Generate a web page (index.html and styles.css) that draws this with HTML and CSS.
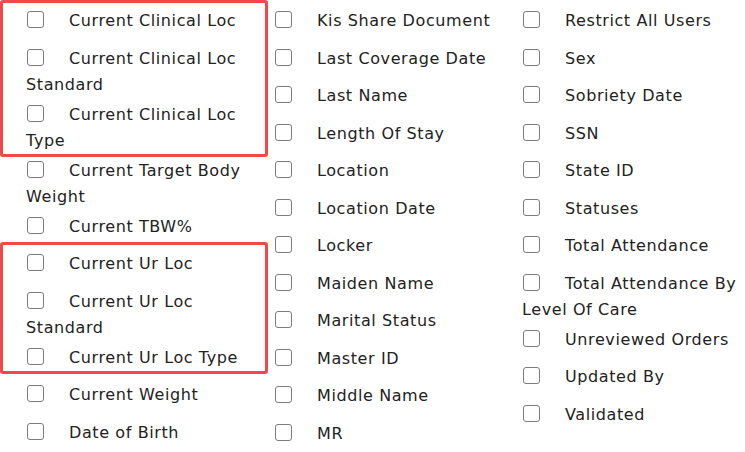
FILE: index.html
```html
<!DOCTYPE html>
<html lang="en">
<head>
<meta charset="utf-8">
<title>Fields</title>
<link rel="stylesheet" href="styles.css">
</head>
<body>
<div class="page">
  <div class="fields">
    <div class="col">
      <label class="item"><input type="checkbox" class="cb"><span>Current Clinical Loc</span></label>
      <label class="item"><input type="checkbox" class="cb"><span>Current Clinical Loc Standard</span></label>
      <label class="item"><input type="checkbox" class="cb"><span>Current Clinical Loc Type</span></label>
      <label class="item"><input type="checkbox" class="cb"><span>Current Target Body Weight</span></label>
      <label class="item"><input type="checkbox" class="cb"><span>Current TBW%</span></label>
      <label class="item"><input type="checkbox" class="cb"><span>Current Ur Loc</span></label>
      <label class="item"><input type="checkbox" class="cb"><span>Current Ur Loc Standard</span></label>
      <label class="item"><input type="checkbox" class="cb"><span>Current Ur Loc Type</span></label>
      <label class="item"><input type="checkbox" class="cb"><span>Current Weight</span></label>
      <label class="item"><input type="checkbox" class="cb"><span>Date of Birth</span></label>
    </div>
    <div class="col">
      <label class="item"><input type="checkbox" class="cb"><span>Kis Share Document</span></label>
      <label class="item"><input type="checkbox" class="cb"><span>Last Coverage Date</span></label>
      <label class="item"><input type="checkbox" class="cb"><span>Last Name</span></label>
      <label class="item"><input type="checkbox" class="cb"><span>Length Of Stay</span></label>
      <label class="item"><input type="checkbox" class="cb"><span>Location</span></label>
      <label class="item"><input type="checkbox" class="cb"><span>Location Date</span></label>
      <label class="item"><input type="checkbox" class="cb"><span>Locker</span></label>
      <label class="item"><input type="checkbox" class="cb"><span>Maiden Name</span></label>
      <label class="item"><input type="checkbox" class="cb"><span>Marital Status</span></label>
      <label class="item"><input type="checkbox" class="cb"><span>Master ID</span></label>
      <label class="item"><input type="checkbox" class="cb"><span>Middle Name</span></label>
      <label class="item"><input type="checkbox" class="cb"><span>MR</span></label>
    </div>
    <div class="col">
      <label class="item"><input type="checkbox" class="cb"><span>Restrict All Users</span></label>
      <label class="item"><input type="checkbox" class="cb"><span>Sex</span></label>
      <label class="item"><input type="checkbox" class="cb"><span>Sobriety Date</span></label>
      <label class="item"><input type="checkbox" class="cb"><span>SSN</span></label>
      <label class="item"><input type="checkbox" class="cb"><span>State ID</span></label>
      <label class="item"><input type="checkbox" class="cb"><span>Statuses</span></label>
      <label class="item"><input type="checkbox" class="cb"><span>Total Attendance</span></label>
      <label class="item"><input type="checkbox" class="cb"><span>Total Attendance By Level Of Care</span></label>
      <label class="item"><input type="checkbox" class="cb"><span>Unreviewed Orders</span></label>
      <label class="item"><input type="checkbox" class="cb"><span>Updated By</span></label>
      <label class="item"><input type="checkbox" class="cb"><span>Validated</span></label>
    </div>
  </div>
  <div class="mark mark-top"></div>
  <div class="mark mark-bottom"></div>
</div>
</body>
</html>
```

FILE: styles.css
```css
html, body {
  margin: 0;
  padding: 0;
  background: #ffffff;
  overflow: hidden;
}

.page {
  position: relative;
  width: 745px;
  height: 452px;
  overflow: hidden;
  font-family: "DejaVu Sans", Verdana, sans-serif;
  font-size: 16px;
  letter-spacing: 0.6px;
  color: #222222;
}

.fields {
  display: grid;
  grid-template-columns: 248px 248px 1fr;
  padding: 8px 0 0 26px;
  box-sizing: border-box;
  width: 745px;
}

.col {
  display: flex;
  flex-direction: column;
}

.col:not(:last-child) {
  padding-right: 6px;
}

.item {
  display: block;
  box-sizing: border-box;
  min-height: 37.5px;
  padding-bottom: 4px;
  line-height: 26px;
  cursor: pointer;
}

.cb {
  -webkit-appearance: none;
  appearance: none;
  display: inline-block;
  width: 17px;
  height: 17px;
  margin: 0 25px 0 1px;
  vertical-align: -2px;
  border: 1.5px solid #7b7b7b;
  border-radius: 3px;
  background: #ffffff;
  box-sizing: border-box;
}

.mark {
  position: absolute;
  left: 0;
  width: 268px;
  border: 3.5px solid #f24848;
  border-radius: 3px;
  box-sizing: border-box;
  pointer-events: none;
}

.mark-top {
  top: 0;
  height: 157px;
}

.mark-bottom {
  top: 242px;
  height: 132px;
}
```
